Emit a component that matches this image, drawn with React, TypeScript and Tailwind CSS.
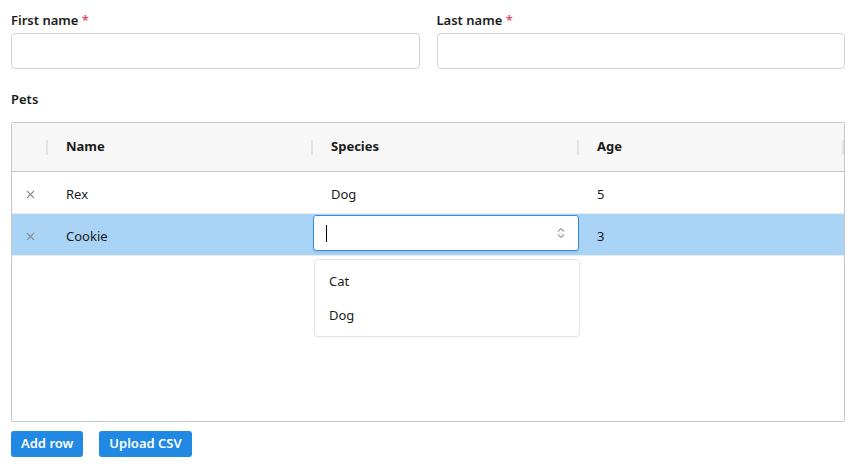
const rows = [
  { name: "Rex", species: "Dog", age: "5" },
  { name: "Cookie", species: "", age: "3", editing: true },
];

function Field({ label }: { label: string }) {
  return (
    <div className="flex flex-col">
      <label className="text-[13px] font-semibold text-[#1b1b1b] leading-[18px] h-[22px]">
        {label} <span className="text-[#e5486b]">*</span>
      </label>
      <input className="h-[36px] rounded-[4px] border border-[#cfd3d8] bg-white px-2 outline-none" />
    </div>
  );
}

function SpeciesEditor() {
  return (
    <div className="relative h-full">
      <div className="absolute left-0 right-0 top-[1px] h-[36px] flex items-center justify-between rounded-[3px] border border-[#2e8ee4] bg-white pl-3 pr-3 shadow-[0_2px_2px_rgba(0,0,0,0.08)]">
        <span className="w-[1px] h-[17px] bg-black" />
        <svg width="10" height="14" viewBox="0 0 10 14" fill="none" stroke="#9aa0a6" strokeWidth="1.2">
          <path d="M2 5.5 L5 2.5 L8 5.5" />
          <path d="M2 8.5 L5 11.5 L8 8.5" />
        </svg>
      </div>
      <div className="absolute left-[1px] right-[-1px] top-[45px] h-[78px] rounded-[4px] border border-[#e3e5e8] bg-white flex flex-col pt-[5px] shadow-[0_1px_2px_rgba(0,0,0,0.04)]">
        <div className="h-[34px] flex items-center px-[14px] text-[#1b1b1b]">Cat</div>
        <div className="h-[34px] flex items-center px-[14px] text-[#1b1b1b]">Dog</div>
      </div>
    </div>
  );
}

export default function App() {
  return (
    <div
      className="w-[854px] h-[464px] bg-white pl-[11px] pr-[9px] pt-[11px] text-[13px] text-[#1b1b1b] overflow-hidden"
      style={{ fontFamily: '"Noto Sans", "Open Sans", sans-serif' }}
    >
      <div className="grid grid-cols-2 gap-[17px]">
        <Field label="First name" />
        <Field label="Last name" />
      </div>

      <div className="mt-[21px] text-[13px] font-semibold leading-[18px]">Pets</div>

      <div className="mt-[14px] h-[300px] rounded-[2px] border border-[#c5c9ce] overflow-visible">
        <div className="grid grid-cols-[36px_265px_266px_1fr] h-[49px] bg-[#f7f7f7] border-b border-[#c5c9ce] font-bold text-[13px]">
          {["", "Name", "Species", "Age"].map((h, i) => (
            <div key={i} className="relative flex items-center pl-[18px]">
              {h}
              <span className="absolute right-0 top-[17px] h-[15px] w-[2px] bg-[#e2e4e8]" />
            </div>
          ))}
        </div>
        {rows.map((r) => (
          <div
            key={r.name}
            className={`grid grid-cols-[36px_265px_266px_1fr] h-[42px] border-b border-[#eaecef] ${
              r.editing ? "bg-[#aad4f6]" : "bg-white"
            }`}
          >
            <div className="flex items-center justify-center pt-[3px]">
              <svg width="9" height="9" viewBox="0 0 9 9" stroke="#8a8f96" strokeWidth="1.1">
                <path d="M1 1 L8 8 M8 1 L1 8" />
              </svg>
            </div>
            <div className="flex items-center pl-[18px] pt-[4px]">{r.name}</div>
            {r.editing ? (
              <SpeciesEditor />
            ) : (
              <div className="flex items-center pl-[18px] pt-[4px]">{r.species}</div>
            )}
            <div className="flex items-center pl-[18px] pt-[4px]">{r.age}</div>
          </div>
        ))}
      </div>

      <div className="mt-[9px] flex gap-[16px]">
        <button className="h-[26px] px-[10px] rounded-[3px] bg-[#2189e3] text-white font-semibold text-[13px]">
          Add row
        </button>
        <button className="h-[26px] px-[10px] rounded-[3px] bg-[#2189e3] text-white font-semibold text-[13px]">
          Upload CSV
        </button>
      </div>
    </div>
  );
}
